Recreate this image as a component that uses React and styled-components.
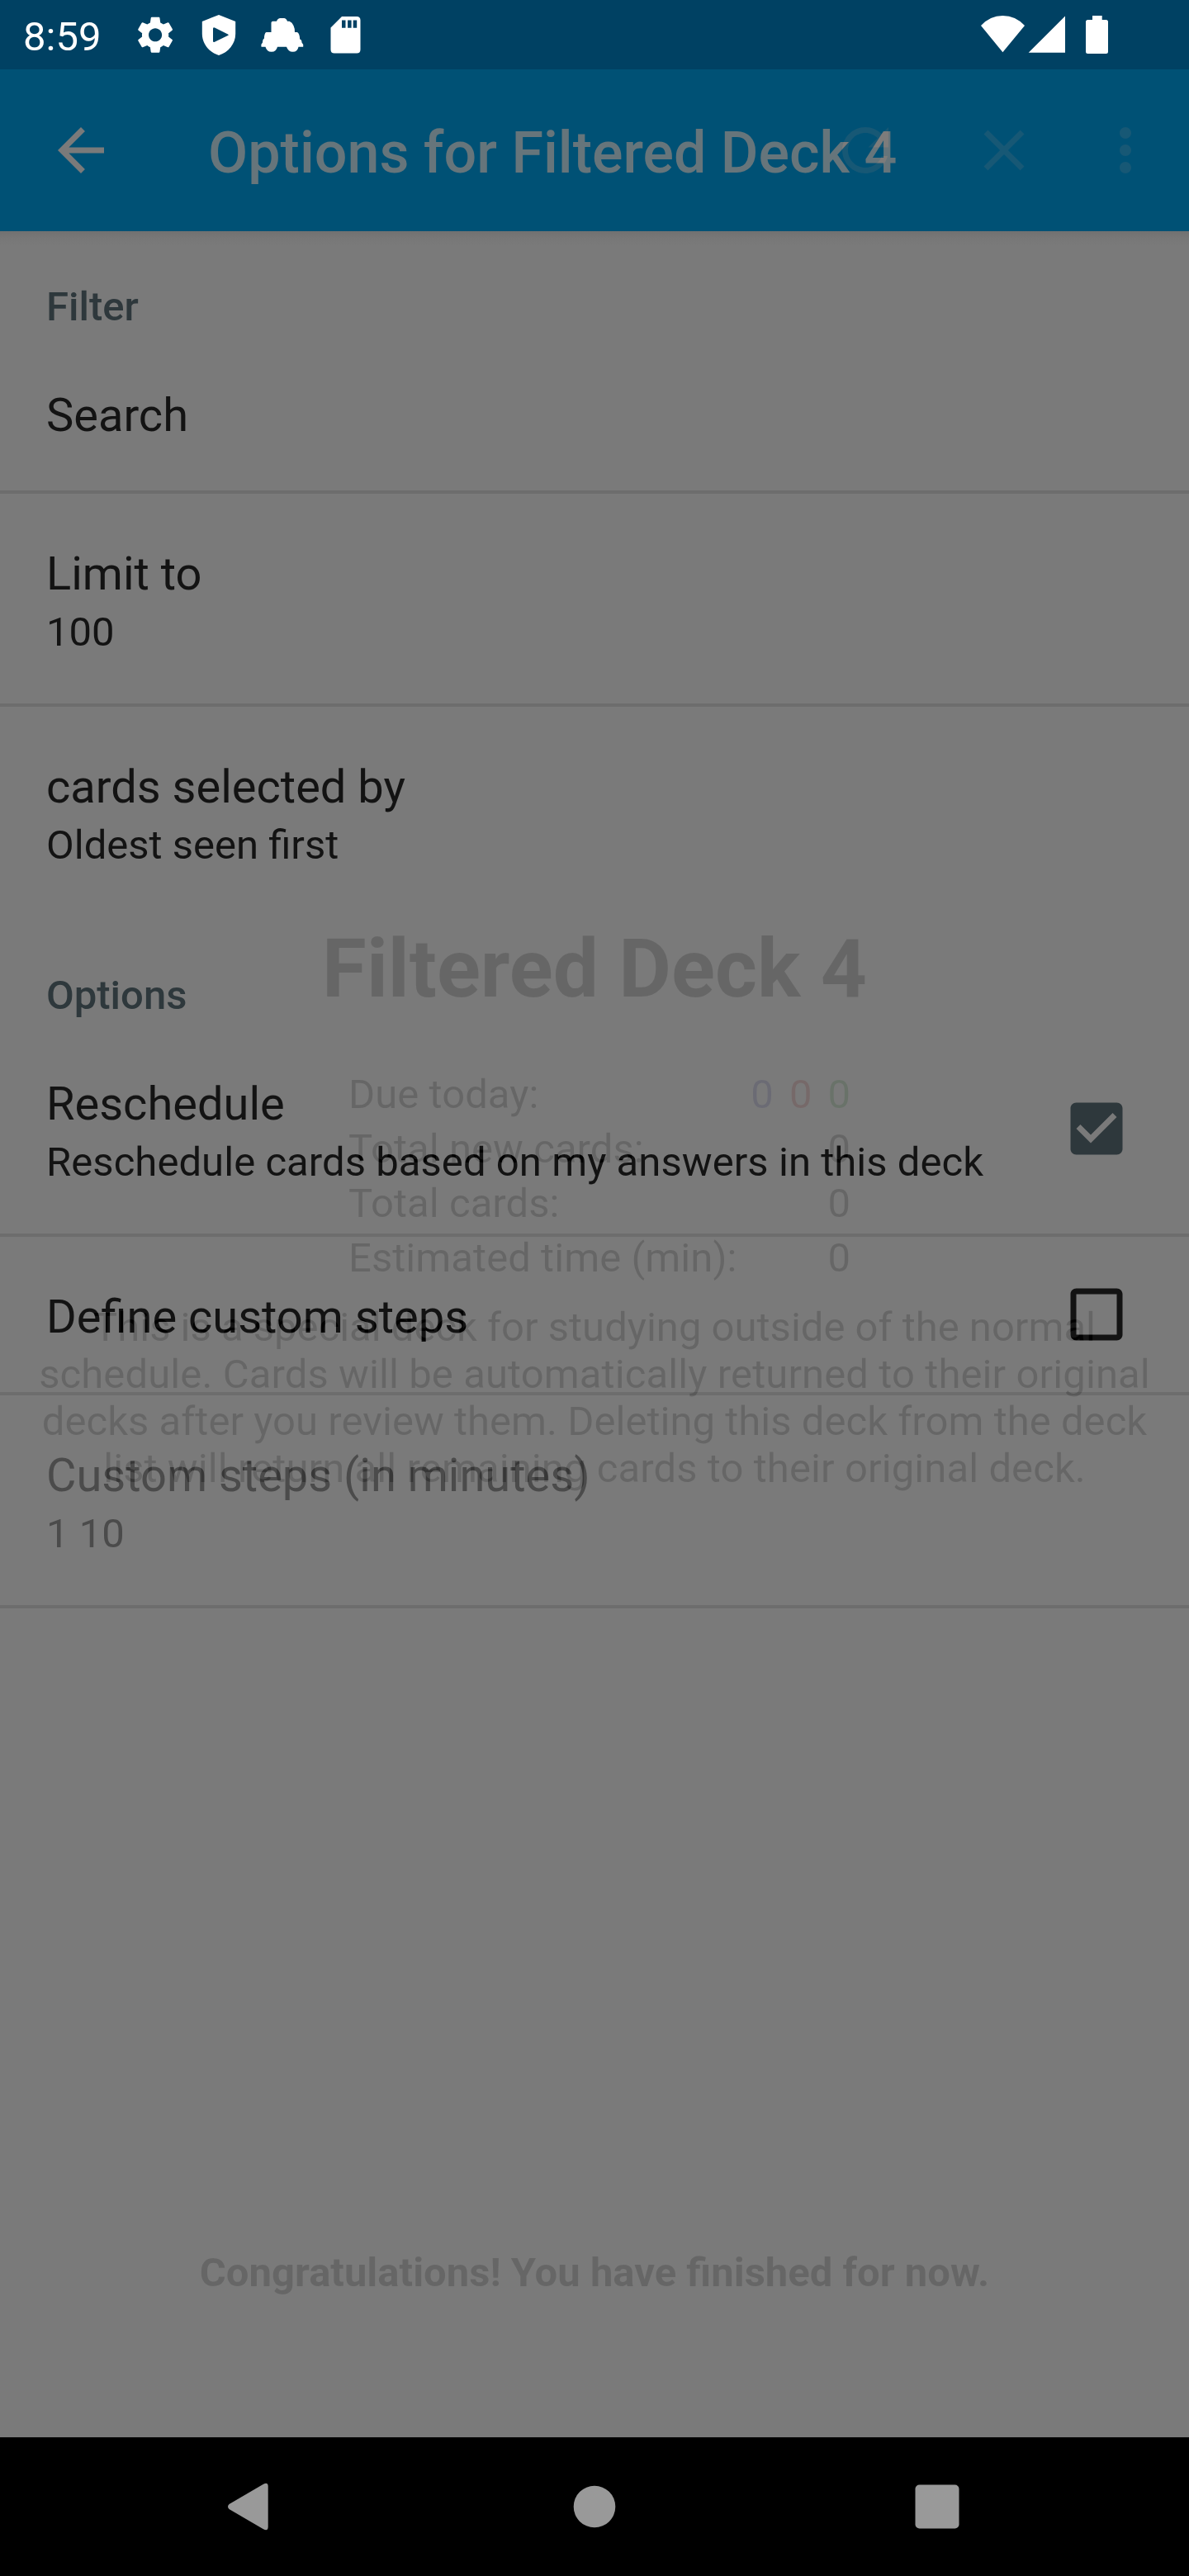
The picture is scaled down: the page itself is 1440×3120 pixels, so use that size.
import React from "react";
import styled, { createGlobalStyle } from "styled-components";

const GlobalStyle = createGlobalStyle`
  * { box-sizing: border-box; }
  body { margin: 0; background: #7a7a7a; }
`;

const Screen = styled.div`
  position: relative;
  display: flex;
  flex-direction: column;
  width: 1440px;
  height: 3120px;
  overflow: hidden;
  background: #7a7a7a;
  color: #131313;
  font-family: Roboto, "Noto Sans", sans-serif;
`;

const StatusBar = styled.header`
  display: flex;
  justify-content: space-between;
  height: 84px;
  padding: 0 98px 0 28px;
  background: #004163;
  color: #fff;
`;

const StatusGroup = styled.div`
  display: flex;
  align-items: center;
`;

const Clock = styled.span`
  width: 132.5px;
  padding-top: 5px;
  font-size: 49px;
  line-height: 58px;
  white-space: nowrap;
`;

const Icon = styled.svg`
  display: block;
  flex: none;
  width: ${(p) => p.$w}px;
  height: ${(p) => p.$h || p.$w}px;
  fill: currentColor;
`;

const Toolbar = styled.div`
  display: flex;
  align-items: center;
  position: relative;
  height: 196px;
  padding-left: 56px;
  gap: 112px;
  background: #005175;
  color: #7a7a7a;
`;

const ToolbarTitle = styled.h1`
  margin: 0;
  padding-top: 6px;
  font-size: 70px;
  line-height: 82px;
  font-weight: 500;
  color: #66757b;
  white-space: nowrap;
`;

const FadingActions = styled.div`
  position: absolute;
  top: 56px;
  right: 35px;
  display: flex;
  gap: 84px;
  color: rgb(23, 7, 0);
  mix-blend-mode: plus-lighter;
`;

const OverflowSlot = styled.div`
  margin-left: -21px;
`;

const Content = styled.main`
  flex: 1;
  background: linear-gradient(#717171, #777777 8px, #7a7a7a 18px);
`;

const SectionHeader = styled.h2`
  margin: 0;
  height: 126px;
  padding: 63px 56px 0;
  font-size: 49px;
  line-height: 58px;
  font-weight: 500;
  color: #2e383c;
`;

const Preference = styled.div`
  display: flex;
  align-items: center;
  justify-content: space-between;
  height: ${(p) => (p.$tall ? 258 : 192)}px;
  padding: 0 70px 0 56px;
  border-bottom: 4px solid ${(p) => (p.$last ? "transparent" : "#6d6d6d")};
  color: ${(p) => (p.$disabled ? "#4b4b4b" : "#131313")};
`;

const PreferenceText = styled.div`
  align-self: flex-start;
  padding-top: 64px;
  white-space: nowrap;
`;

const PreferenceTitle = styled.div`
  font-size: 56px;
  line-height: 66px;
`;

const PreferenceSummary = styled.div`
  margin-top: 9px;
  font-size: 49px;
  line-height: 58px;
  letter-spacing: ${(p) => (p.$tracking ? `${p.$tracking}px` : "normal")};
`;

const CheckIcon = styled(Icon)`
  color: ${(p) => (p.$checked ? "#2e383c" : "#131313")};
`;

const FadingOverview = styled.section`
  position: absolute;
  top: 280px;
  left: 0;
  width: 1440px;
  height: 2672px;
  display: flex;
  flex-direction: column;
  align-items: center;
  padding: 836px 0 170px;
  color: #141414;
  font-size: 49px;
  mix-blend-mode: difference;
`;

const DeckName = styled.div`
  font-size: 98px;
  line-height: 116px;
  font-weight: 700;
`;

const Stats = styled.div`
  width: 608px;
  margin: 61px 0 22px 12px;
`;

const StatRow = styled.div`
  display: flex;
  justify-content: space-between;
  line-height: 66px;
`;

const StatLabel = styled.span`
  letter-spacing: 0.06px;
`;

const Counts = styled.div`
  display: flex;
  gap: 19px;
`;

const Count = styled.span`
  color: ${(p) => p.$color || "inherit"};
`;

const DescriptionLine = styled.div`
  line-height: 57px;
  text-align: center;
  white-space: nowrap;
  letter-spacing: ${(p) => p.$tracking || 0}px;
`;

const Finished = styled.div`
  margin-top: auto;
  line-height: 58px;
  font-weight: 700;
`;

const NavBar = styled.nav`
  display: flex;
  align-items: center;
  justify-content: space-between;
  height: 168px;
  padding: 0 263px;
  background: #000;
  color: #999;
`;

const PATHS = {
  back: "M20 11H7.83l5.59-5.59L12 4l-8 8 8 8 1.41-1.41L7.83 13H20v-2z",
  refresh:
    "M17.65 6.35C16.2 4.9 14.21 4 12 4c-4.42 0-7.99 3.58-7.99 8s3.57 8 7.99 8c3.73 0 6.84-2.55 7.73-6h-2.08c-.82 2.33-3.04 4-5.65 4-3.31 0-6-2.69-6-6s2.69-6 6-6c1.66 0 3.14.69 4.22 1.78L13 11h7V4l-2.35 2.35z",
  close:
    "M19 6.41L17.59 5 12 10.59 6.41 5 5 6.41 10.59 12 5 17.59 6.41 19 12 13.41 17.59 19 19 17.59 13.41 12z",
  more: "M12 8c1.1 0 2-.9 2-2s-.9-2-2-2-2 .9-2 2 .9 2 2 2zm0 2c-1.1 0-2 .9-2 2s.9 2 2 2 2-.9 2-2-.9-2-2-2zm0 6c-1.1 0-2 .9-2 2s.9 2 2 2 2-.9 2-2-.9-2-2-2z",
  checked:
    "M19 3H5c-1.11 0-2 .9-2 2v14c0 1.1.89 2 2 2h14c1.11 0 2-.9 2-2V5c0-1.1-.89-2-2-2zm-9 14l-5-5 1.41-1.41L10 14.17l7.59-7.59L19 8l-9 9z",
  unchecked:
    "M19 5v14H5V5h14m0-2H5c-1.1 0-2 .9-2 2v14c0 1.1.9 2 2 2h14c1.1 0 2-.9 2-2V5c0-1.1-.9-2-2-2z",
  settings:
    "M19.14 12.94c.04-.3.06-.61.06-.94 0-.32-.02-.64-.07-.94l2.03-1.58c.18-.14.23-.41.12-.61l-1.92-3.32c-.12-.22-.37-.29-.59-.22l-2.39.96c-.5-.38-1.03-.7-1.62-.94l-.36-2.54c-.04-.24-.24-.41-.48-.41h-3.84c-.24 0-.43.17-.47.41l-.36 2.54c-.59.24-1.13.57-1.62.94l-2.39-.96c-.22-.08-.47 0-.59.22L2.74 8.87c-.12.21-.08.47.12.61l2.03 1.58c-.05.3-.09.63-.09.94s.02.64.07.94l-2.03 1.58c-.18.14-.23.41-.12.61l1.92 3.32c.12.22.37.29.59.22l2.39-.96c.5.38 1.03.7 1.62.94l.36 2.54c.05.24.24.41.48.41h3.84c.24 0 .44-.17.47-.41l.36-2.54c.59-.24 1.13-.56 1.62-.94l2.39.96c.22.08.47 0 .59-.22l1.92-3.32c.12-.22.07-.47-.12-.61l-2.01-1.58zM12 15.6c-1.98 0-3.6-1.62-3.6-3.6s1.62-3.6 3.6-3.6 3.6 1.62 3.6 3.6-1.62 3.6-3.6 3.6z",
};

const Glyph = ({ name, size = 84 }) => (
  <Icon $w={size} viewBox="0 0 24 24">
    <path d={PATHS[name]} />
  </Icon>
);

const NotificationIcons = () => (
  <>
    <Icon $w={54} $h={84} viewBox="160.5 0 54 84">
      <g transform="translate(160.7 15.4) scale(2.24)">
        <path d={PATHS.settings} />
      </g>
    </Icon>
    <Icon $w={80} $h={84} viewBox="214.5 0 80 84">
      <path
        fillRule="evenodd"
        d="M264.5 18L284.7 26V41C284.7 53 276 63.500 264.5 67C253 63.500 244.300 53 244.300 41V26ZM259.5 33.5Q257.5 32.5 257.500 34.8V49.5Q257.500 51.8 259.5 50.8L275.5 43Q277 42.2 275.5 41.4Z"
      />
    </Icon>
    <Icon $w={86} $h={84} viewBox="294.5 0 86 84">
      <path d="M328 27.500Q328 25.700 330 25.700H334.500Q336 22 339 22H343.500Q346 22 347.500 25.700H350Q353.500 27 355 31Q356.500 34 356.500 39H359.500Q362.300 40 362.700 47.500Q365 48 365 51.500Q367 53 366.700 56.700H361Q360 62.700 354 62.700Q348.500 62.700 346.500 56.700H335.500Q334 62.700 328.300 62.700Q322.500 62.700 321 56.700H316Q315.500 53 317.500 51.500Q317.500 47.500 319.500 46.500Q319.500 40 322 39H328Z" />
    </Icon>
    <Icon $w={70} $h={84} viewBox="380.5 0 70 84">
      <path
        fillRule="evenodd"
        d="M413.500 20H431.500Q436 20 436 24.500V60Q436 64.500 431.500 64.500H404.500Q400 64.500 400 60V33.500ZM413.500 24.500V33.700H418V24.500ZM420.600 24.500V33.700H425.100V24.500ZM427.200 24.500V33.700H431.700V24.500Z"
      />
    </Icon>
  </>
);

const SystemIcons = () => (
  <>
    <Icon $w={56} $h={84} viewBox="1186 0 56 84">
      <path d="M1188 31Q1199 19 1214.400 19Q1230 19 1241 31L1214.400 63.300Z" />
    </Icon>
    <Icon $w={58} $h={84} viewBox="1242 0 58 84">
      <path d="M1290 19.500V63.700H1245.700Z" />
    </Icon>
    <Icon $w={42} $h={84} viewBox="1300 0 42 84">
      <path d="M1323 19H1334.700V24H1339.500Q1342 24 1342 26.500V62.500Q1342 65 1339.500 65H1317.500Q1315 65 1315 62.500V26.500Q1315 24 1317.500 24H1323Z" />
    </Icon>
  </>
);

const Pref = ({ title, summary, tracking, checked, disabled, last }) => (
  <Preference $tall={Boolean(summary)} $disabled={disabled} $last={last}>
    <PreferenceText>
      <PreferenceTitle>{title}</PreferenceTitle>
      {summary && (
        <PreferenceSummary $tracking={tracking}>{summary}</PreferenceSummary>
      )}
    </PreferenceText>
    {checked !== undefined && (
      <CheckIcon $w={84} $checked={checked} viewBox="0 0 24 24">
        <path d={checked ? PATHS.checked : PATHS.unchecked} />
      </CheckIcon>
    )}
  </Preference>
);

const Stat = ({ label, children }) => (
  <StatRow>
    <StatLabel>{label}</StatLabel>
    {children || <Count>0</Count>}
  </StatRow>
);

export default function App() {
  return (
    <Screen>
      <GlobalStyle />
      <StatusBar>
        <StatusGroup>
          <Clock>8:59</Clock>
          <NotificationIcons />
        </StatusGroup>
        <StatusGroup>
          <SystemIcons />
        </StatusGroup>
      </StatusBar>

      <Toolbar>
        <Glyph name="back" />
        <ToolbarTitle>Options for Filtered Deck 4</ToolbarTitle>
        <FadingActions>
          <Glyph name="refresh" />
          <Glyph name="close" />
          <OverflowSlot>
            <Glyph name="more" />
          </OverflowSlot>
        </FadingActions>
      </Toolbar>

      <Content>
        <SectionHeader>Filter</SectionHeader>
        <Pref title="Search" />
        <Pref title="Limit to" summary="100" />
        <Pref title="cards selected by" summary="Oldest seen first" last />
        <SectionHeader>Options</SectionHeader>
        <Pref
          title="Reschedule"
          summary="Reschedule cards based on my answers in this deck"
          tracking={0.055}
          checked
        />
        <Pref title="Define custom steps" checked={false} />
        <Pref title="Custom steps (in minutes)" summary="1 10" disabled />
      </Content>

      <FadingOverview>
        <DeckName>Filtered Deck 4</DeckName>
        <Stats>
          <Stat label="Due today:">
            <Counts>
              <Count $color="#0f0f06">0</Count>
              <Count $color="#041111">0</Count>
              <Count $color="#110811">0</Count>
            </Counts>
          </Stat>
          <Stat label="Total new cards:" />
          <Stat label="Total cards:" />
          <Stat label="Estimated time (min):" />
        </Stats>
        <DescriptionLine>
          This is a special deck for studying outside of the normal
        </DescriptionLine>
        <DescriptionLine $tracking={0.1}>
          schedule. Cards will be automatically returned to their original
        </DescriptionLine>
        <DescriptionLine $tracking={0.035}>
          decks after you review them. Deleting this deck from the deck
        </DescriptionLine>
        <DescriptionLine $tracking={0.085}>
          list will return all remaining cards to their original deck.
        </DescriptionLine>
        <Finished>Congratulations! You have finished for now.</Finished>
      </FadingOverview>

      <NavBar>
        <Icon $w={84} viewBox="263 2994 84 84">
          <path d="M319 3008.700Q324.700 3006 324.700 3011.500V3060.500Q324.700 3066 319 3063.300L277.500 3039Q274.500 3036 277.500 3033Z" />
        </Icon>
        <Icon $w={84} viewBox="0 0 84 84">
          <circle cx="42" cy="42" r="25.3" />
        </Icon>
        <Icon $w={84} viewBox="0 0 84 84">
          <rect x="15.500" y="15.500" width="53" height="53" rx="5" />
        </Icon>
      </NavBar>
    </Screen>
  );
}
